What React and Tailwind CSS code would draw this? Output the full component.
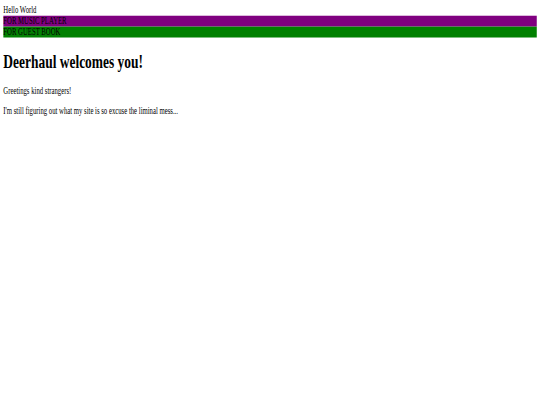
import React from 'react';

export default function App() {
  return (
    <div className="w-[1286px] origin-top-left scale-x-[0.42] scale-y-[0.605] bg-white font-['Liberation_Serif',serif] text-[16px] leading-[normal] text-black">
      <div className="p-2">
        <div>Hello World</div>
        <div className="bg-[#800080]">FOR MUSIC PLAYER</div>
        <div className="bg-[#008000]">FOR GUEST BOOK</div>
        <h1 className="my-[21px] text-[32px] font-bold leading-[normal]">Deerhaul welcomes you!</h1>
        <p className="my-4">Greetings kind strangers!</p>
        <p className="my-4">I'm still figuring out what my site is so excuse the liminal mess...</p>
      </div>
    </div>
  );
}
